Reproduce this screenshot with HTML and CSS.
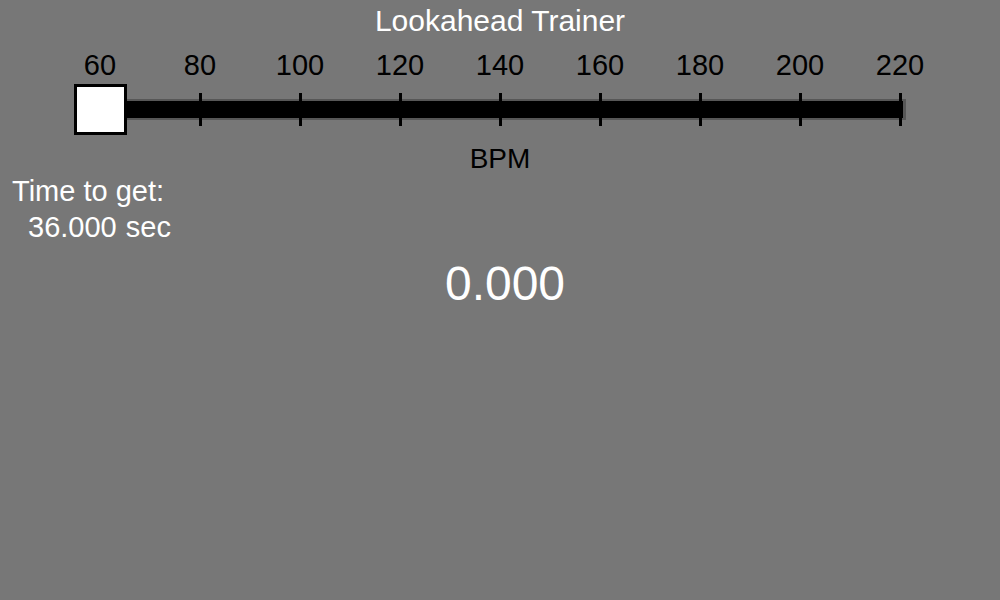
FILE: index.html
```html
<!DOCTYPE html>
<html lang="en">
<head>
  <meta charset="utf8">
  <title>Lookahead Trainer</title>
  <link rel="stylesheet" href="styles.css">
</head>
<body>
  <h1 class="title">Lookahead Trainer</h1>

  <section class="slider">
    <ol class="scale">
      <li>60</li><li>80</li><li>100</li><li>120</li><li>140</li><li>160</li><li>180</li><li>200</li><li>220</li>
    </ol>
    <div class="track">
      <div class="bar"></div>
      <div class="thumb"></div>
      <i class="tick c2"></i><i class="tick c3"></i><i class="tick c4"></i><i class="tick c5"></i>
      <i class="tick c6"></i><i class="tick c7"></i><i class="tick c8"></i><i class="tick c9"></i>
    </div>
    <div class="unit">BPM</div>
  </section>

  <section class="target">
    <div class="label">Time to get:</div>
    <div class="value"><span>36.000</span> <span>sec</span></div>
  </section>

  <div class="clock">0.000</div>
</body>
</html>
```

FILE: styles.css
```css
* { box-sizing: border-box; font-family: "Liberation Sans", Arial, sans-serif; }
body { margin: 0; background: #777; color: #000; font-size: 28px; line-height: 32px; }

.title { margin: 5px 0 0; font-size: 30px; font-weight: normal; line-height: 32px; color: #fff; text-align: center; }

.slider { width: 900px; margin-left: 50px; }
.scale { display: grid; grid-template-columns: repeat(9, 100px); margin: 12px 0 0; padding: 0; list-style: none; text-align: center; font-size: 29px; }
.scale li { display: block; }

.track { display: grid; grid-template-columns: repeat(9, 100px); height: 51px; margin-top: 3px; align-items: center; }
.bar { grid-row: 1; grid-column: 1 / -1; height: 17px; margin: 0 47px 0 75px; background: #000; box-shadow: 1px 0 0 2px #575757; }
.thumb { grid-row: 1; grid-column: 1; justify-self: center; width: 53px; height: 51px; background: #fff; border: 3px solid #000; z-index: 1; }
.tick { grid-row: 1; justify-self: center; width: 3px; height: 33px; background: #000; }
.c2 { grid-column: 2; } .c3 { grid-column: 3; } .c4 { grid-column: 4; } .c5 { grid-column: 5; }
.c6 { grid-column: 6; } .c7 { grid-column: 7; } .c8 { grid-column: 8; } .c9 { grid-column: 9; }

.unit { margin-top: 8px; text-align: center; }

.target { color: #fff; padding-left: 12px; font-size: 29px; }
.value { padding-left: 16px; margin-top: 4px; word-spacing: 1px; }

.clock { margin-top: 13px; padding-left: 10px; font-size: 48px; line-height: 56px; color: #fff; text-align: center; }
```
